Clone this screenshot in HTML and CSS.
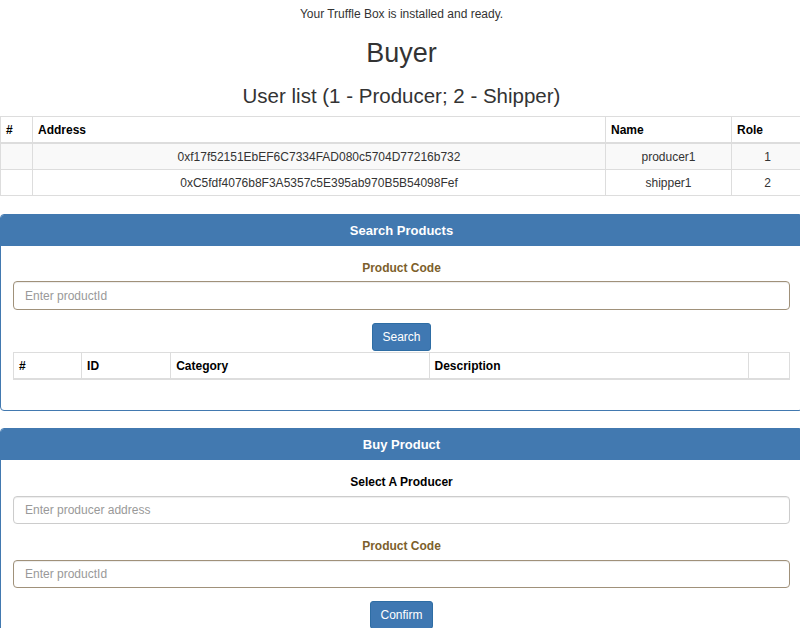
FILE: index.html
```html
<!DOCTYPE html>
<html>
<head>
<meta charset="utf-8">
<link rel="stylesheet" href="styles.css">
</head>
<body>
<div class="page">
  <p class="ready">Your Truffle Box is installed and ready.</p>
  <h1 class="title">Buyer</h1>
  <h2 class="subtitle">User list (1 - Producer; 2 - Shipper)</h2>
  <table class="tbl users">
    <colgroup>
      <col class="c-num"><col class="c-addr"><col class="c-name"><col class="c-role">
    </colgroup>
    <thead>
      <tr><th>#</th><th>Address</th><th>Name</th><th>Role</th></tr>
    </thead>
    <tbody>
      <tr class="odd"><td></td><td>0xf17f52151EbEF6C7334FAD080c5704D77216b732</td><td>producer1</td><td>1</td></tr>
      <tr><td></td><td>0xC5fdf4076b8F3A5357c5E395ab970B5B54098Fef</td><td>shipper1</td><td>2</td></tr>
    </tbody>
  </table>

  <section class="panel panel-search">
    <div class="panel-heading">Search Products</div>
    <div class="panel-body">
      <div class="field warn">
        <label class="label">Product Code</label>
        <input class="input" type="text" placeholder="Enter productId">
      </div>
      <div class="btn-row"><button class="btn">Search</button></div>
      <table class="tbl products">
        <colgroup>
          <col class="p-num"><col class="p-id"><col class="p-cat"><col class="p-desc"><col class="p-x">
        </colgroup>
        <thead>
          <tr><th>#</th><th>ID</th><th>Category</th><th>Description</th><th></th></tr>
        </thead>
      </table>
    </div>
  </section>

  <section class="panel panel-buy">
    <div class="panel-heading">Buy Product</div>
    <div class="panel-body">
      <div class="field">
        <label class="label">Select A Producer</label>
        <input class="input" type="text" placeholder="Enter producer address">
      </div>
      <div class="field warn">
        <label class="label">Product Code</label>
        <input class="input" type="text" placeholder="Enter productId">
      </div>
      <div class="btn-row"><button class="btn">Confirm</button></div>
    </div>
  </section>
</div>
</body>
</html>
```

FILE: styles.css
```css
html, body {
  margin: 0;
  padding: 0;
  overflow: hidden;
  background: #fff;
}
body {
  font-family: "Liberation Sans", Arial, Helvetica, sans-serif;
  color: #333;
  font-size: 12px;
}
.page {
  margin-right: -3px;
}
.ready {
  margin: 0;
  padding-top: 6px;
  height: 20px;
  line-height: 16px;
  font-size: 12px;
  text-align: center;
  color: #333;
}
.title {
  margin: 10px 0 0;
  height: 34px;
  line-height: 34px;
  font-size: 27px;
  font-weight: normal;
  text-align: center;
  color: #333;
}
.subtitle {
  margin: 12px 0 0;
  height: 28px;
  line-height: 28px;
  font-size: 20.5px;
  font-weight: normal;
  text-align: center;
  color: #333;
}
.tbl {
  border-collapse: collapse;
  width: 100%;
  table-layout: fixed;
  font-size: 12px;
}
.tbl th, .tbl td {
  border: 1px solid #ddd;
  padding: 0 5px;
  height: 25px;
  line-height: 16px;
}
.tbl th {
  text-align: left;
  font-weight: bold;
  color: #000;
  border-bottom: 2px solid #ddd;
}
.tbl td {
  text-align: center;
  color: #333;
}
.users {
  margin-top: 6px;
}
.users tr.odd td {
  background: #f9f9f9;
}
.c-num { width: 32px; }
.c-addr { width: 573px; }
.c-name { width: 126px; }
.c-role { width: 72px; }

.panel {
  border: 1px solid #4279b0;
  border-radius: 4px;
  background: #fff;
  margin-top: 18px;
}
.panel-buy {
  margin-top: 17px;
}
.panel-heading {
  color: #fff;
  text-align: center;
  font-weight: bold;
  font-size: 13px;
  height: 31px;
  line-height: 31px;
  border-radius: 3px 3px 0 0;
  background: #4279b0;
}
.panel-body {
  padding: 14px 12px 30px;
}
.field {
  display: flex;
  flex-direction: column;
  align-items: center;
}
.label {
  font-size: 12px;
  font-weight: bold;
  color: #000;
  line-height: 16px;
  margin-bottom: 6px;
}
.field.warn .label {
  color: #7d5f2c;
}
.input {
  box-sizing: border-box;
  align-self: stretch;
  height: 28px;
  border: 1px solid #ccc;
  border-radius: 4px;
  padding: 0 11px;
  font-family: inherit;
  font-size: 12px;
  color: #555;
  box-shadow: inset 0 1px 1px rgba(0,0,0,.075);
  outline: none;
}
.input::placeholder {
  color: #999;
}
.field.warn .input {
  border-color: #a0917a;
}
.panel-search .field .label {
  margin-bottom: 5px;
}
.panel-search .input {
  height: 29px;
}
.btn-row {
  display: flex;
  justify-content: center;
  margin-top: 13px;
}
.btn {
  background: #3f78b2;
  border: 1px solid #2e6da4;
  border-radius: 3px;
  color: #fff;
  font-family: inherit;
  font-size: 12px;
  height: 28px;
  padding: 0 9px;
}
.products {
  margin-top: 1px;
  margin-bottom: 0;
}
.p-num { width: 68px; }
.p-id { width: 89px; }
.p-cat { width: 258px; }
.p-desc { width: 319px; }
.p-x { width: 41px; }
.panel-buy .field + .field {
  margin-top: 14px;
}
```
